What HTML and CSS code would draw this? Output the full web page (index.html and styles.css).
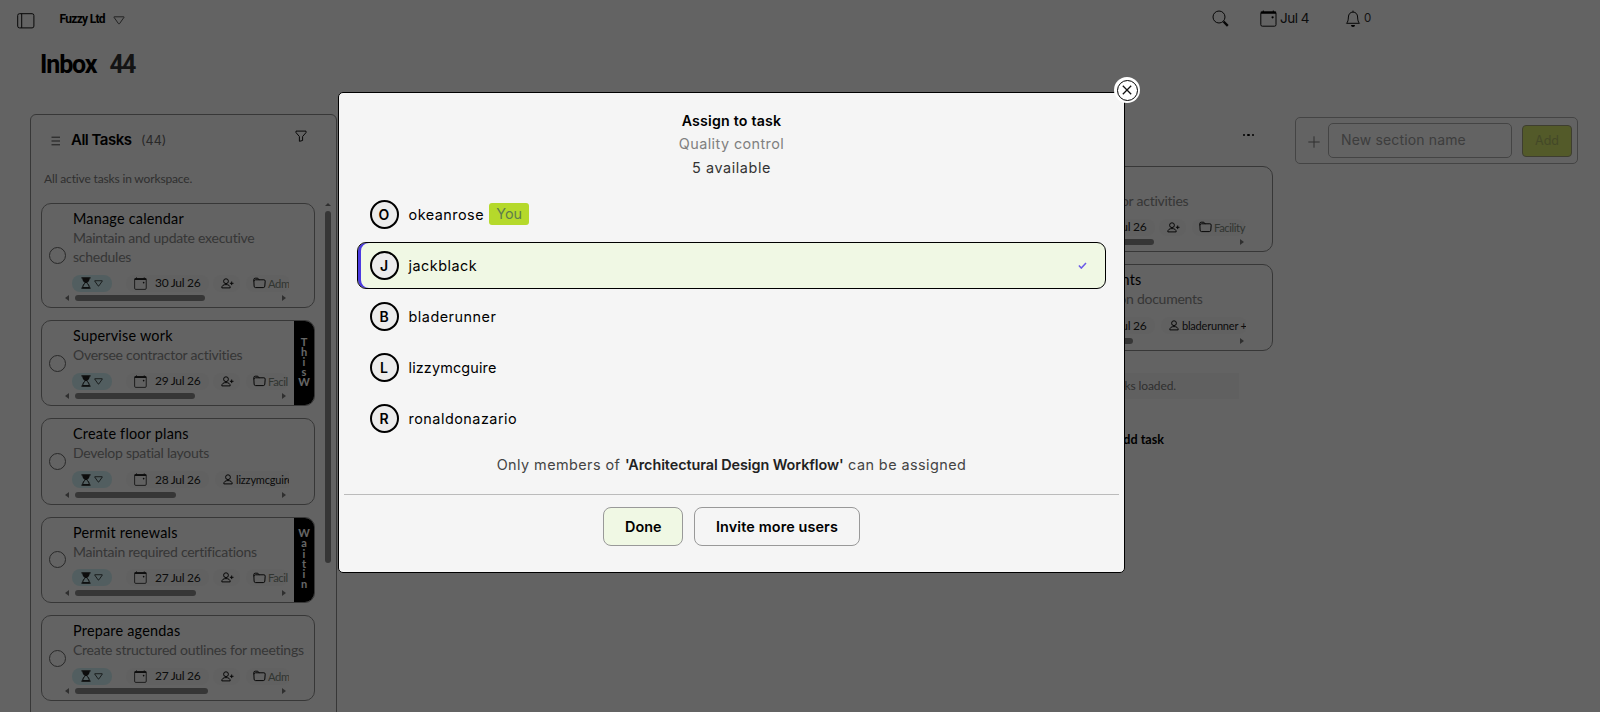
FILE: index.html
```html
<!DOCTYPE html>
<html lang="en">

<head>
    <meta charset="UTF-8">
    <meta name="viewport" content="width=device-width, initial-scale=1.0">
    <title>Inbox</title>
    <link rel="stylesheet" href="styles.css">
</head>

<body>
    <!-- icons -->
    <svg class="sprite">
        <symbol id="sidebar" viewBox="0 0 18 16"><rect x=".7" y=".7" width="16.2" height="14.2" rx="1.8" /><path d="M4.7.7v14.2" /></symbol>
        <symbol id="triangle" viewBox="0 0 12 9"><path d="M1.2.8h9.6q.5 0 .2.5L6.5 7.7q-.5.6-1 0L1 1.300Q.7.8 1.200.8z" /></symbol>
        <symbol id="search" viewBox="0 0 17 17"><circle cx="7" cy="7" r="6" /><path class="thick" d="M11.500 11.500l4.300 4.300" /></symbol>
        <symbol id="calendar" viewBox="0 0 17 17"><rect x=".8" y="2" width="15.200" height="14.200" rx="1.500" /><path class="solid" d="M.8 1.500h2V.4h1v1.100h9V.4h1v1.100h2.300v2.300H.8z" /><circle class="solid" cx="12.600" cy="7.300" r="1.100" /></symbol>
        <symbol id="bell" viewBox="0 0 16 17"><path d="M1.500 13.300h13c-1.300-1-1.800-3.300-1.900-6.300C12.500 4 10.700 2.100 8 2.100S3.500 4 3.400 7c-.1 3-.6 5.300-1.900 6.300zM8 2V.6" /><path class="solid" d="M6 14.900h4a2 2 0 0 1-4 0z" /></symbol>
        <symbol id="funnel" viewBox="0 0 12 12"><path d="M1 1.100h10v1.500L7.600 6.500v4L4.400 11.300V6.500L1 2.600z" /></symbol>
        <symbol id="menu" viewBox="0 0 10 10"><path d="M.5 1.200h8.500M.5 5h8.500M.5 8.800h8.500" /></symbol>
        <symbol id="hourglass" viewBox="0 0 10 12"><path class="solid" d="M.4.300h9.200v1.200H.4zM.4 10.500h9.200v1.200H.4zM1.300 1.300h7.400c0 2.300-1 3.500-2.700 4.700H4C2.300 4.800 1.300 3.600 1.300 1.300z" /><path d="M4.300 6C2.700 7.200 1.800 8.300 1.700 10.700h6.600C8.200 8.300 7.300 7.200 5.700 6" /></symbol>
        <symbol id="person-plus" viewBox="0 0 13 11"><circle cx="5" cy="3.200" r="2.400" /><path d="M.8 9.900c0-2.400 1.700-3.300 4.200-3.300s4.200.9 4.200 3.300zM10.700 3.500v3.600M8.900 5.300h3.600" /></symbol>
        <symbol id="person" viewBox="0 0 10 11"><circle cx="5" cy="3.200" r="2.400" /><path d="M.8 9.900c0-2.400 1.700-3.300 4.200-3.300s4.200.9 4.200 3.300z" /></symbol>
        <symbol id="folder" viewBox="0 0 13 12"><path d="M.8 2.600Q.8 1.200 2.200 1.200h2.600l1.300 1.600h4.800q1.300 0 1.300 1.300l-.4 5q-.1 1.500-1.500 1.500H2.500Q1.200 10.600 1.100 9.100zM.9 4.300Q1 2.900 2.400 2.800h4" /></symbol>
        <symbol id="plus" viewBox="0 0 12 12"><path d="M6 .3v11.400M.3 6h11.400" /></symbol>
        <symbol id="check" viewBox="0 0 9 7"><path d="M.9 3.600l2.400 2.500L8 1" /></symbol>
        <symbol id="cross" viewBox="0 0 10 10"><path d="M.8.8l8.400 8.400M9.200.8L.8 9.200" /></symbol>
    </svg>

    <div class="topbar">
        <svg class="icon i-sidebar"><use href="#sidebar" /></svg>
        <span class="company">Fuzzy Ltd</span>
        <svg class="icon i-company"><use href="#triangle" /></svg>
        <div class="tools">
            <svg class="icon i-search"><use href="#search" /></svg>
            <svg class="icon i-today"><use href="#calendar" /></svg>
            <span class="today">Jul 4</span>
            <svg class="icon i-bell"><use href="#bell" /></svg>
            <span class="alerts">0</span>
        </div>
    </div>
    <h1 class="page-title">Inbox <span class="page-count">44</span></h1>

    <div class="board">
        <div class="column all-tasks">
            <div class="column-head">
                <svg class="icon i-menu"><use href="#menu" /></svg>
                <h2>All Tasks</h2>
                <span class="count">(44)</span>
                <svg class="icon i-funnel"><use href="#funnel" /></svg>
            </div>
            <p class="column-note">All active tasks in workspace.</p>
            <div class="scroller">
                <div class="tasks">
                    <div class="task tall">
                        <span class="radio"></span>
                        <div class="task-body">
                            <div class="title">Manage calendar</div>
                            <div class="desc">Maintain and update executive schedules</div>
                            <div class="meta">
                                <span class="chip status"><svg class="icon i-hourglass"><use href="#hourglass" /></svg><svg class="icon i-drop"><use href="#triangle" /></svg></span>
                                <span class="chip date"><svg class="icon i-date"><use href="#calendar" /></svg>30 Jul 26</span>
                                <span class="chip assign"><svg class="icon i-plus-user"><use href="#person-plus" /></svg></span>
                                <span class="chip folder"><svg class="icon i-folder"><use href="#folder" /></svg>Adm</span>
                            </div>
                            <div class="hbar"><i class="prev"></i><i class="thumb" style="width: 130px"></i><i class="next"></i></div>
                        </div>
                    </div>
                    <div class="task">
                        <span class="radio"></span>
                        <div class="task-body">
                            <div class="title">Supervise work</div>
                            <div class="desc">Oversee contractor activities</div>
                            <div class="meta">
                                <span class="chip status"><svg class="icon i-hourglass"><use href="#hourglass" /></svg><svg class="icon i-drop"><use href="#triangle" /></svg></span>
                                <span class="chip date"><svg class="icon i-date"><use href="#calendar" /></svg>29 Jul 26</span>
                                <span class="chip assign"><svg class="icon i-plus-user"><use href="#person-plus" /></svg></span>
                                <span class="chip folder"><svg class="icon i-folder"><use href="#folder" /></svg>Facil</span>
                            </div>
                            <div class="hbar"><i class="prev"></i><i class="thumb" style="width: 120px"></i><i class="next"></i></div>
                        </div>
                        <div class="strip"><span>T</span><span>h</span><span>i</span><span>s</span><span>W</span></div>
                    </div>
                    <div class="task">
                        <span class="radio"></span>
                        <div class="task-body">
                            <div class="title">Create floor plans</div>
                            <div class="desc">Develop spatial layouts</div>
                            <div class="meta">
                                <span class="chip status"><svg class="icon i-hourglass"><use href="#hourglass" /></svg><svg class="icon i-drop"><use href="#triangle" /></svg></span>
                                <span class="chip date"><svg class="icon i-date"><use href="#calendar" /></svg>28 Jul 26</span>
                                <span class="chip user"><svg class="icon i-user"><use href="#person" /></svg>lizzymcguire</span>
                            </div>
                            <div class="hbar"><i class="prev"></i><i class="thumb" style="width: 101px"></i><i class="next"></i></div>
                        </div>
                    </div>
                    <div class="task">
                        <span class="radio"></span>
                        <div class="task-body">
                            <div class="title">Permit renewals</div>
                            <div class="desc">Maintain required certifications</div>
                            <div class="meta">
                                <span class="chip status"><svg class="icon i-hourglass"><use href="#hourglass" /></svg><svg class="icon i-drop"><use href="#triangle" /></svg></span>
                                <span class="chip date"><svg class="icon i-date"><use href="#calendar" /></svg>27 Jul 26</span>
                                <span class="chip assign"><svg class="icon i-plus-user"><use href="#person-plus" /></svg></span>
                                <span class="chip folder"><svg class="icon i-folder"><use href="#folder" /></svg>Facil</span>
                            </div>
                            <div class="hbar"><i class="prev"></i><i class="thumb" style="width: 121px"></i><i class="next"></i></div>
                        </div>
                        <div class="strip"><span>W</span><span>a</span><span>i</span><span>t</span><span>i</span><span>n</span></div>
                    </div>
                    <div class="task">
                        <span class="radio"></span>
                        <div class="task-body">
                            <div class="title">Prepare agendas</div>
                            <div class="desc">Create structured outlines for meetings</div>
                            <div class="meta">
                                <span class="chip status"><svg class="icon i-hourglass"><use href="#hourglass" /></svg><svg class="icon i-drop"><use href="#triangle" /></svg></span>
                                <span class="chip date"><svg class="icon i-date"><use href="#calendar" /></svg>27 Jul 26</span>
                                <span class="chip assign"><svg class="icon i-plus-user"><use href="#person-plus" /></svg></span>
                                <span class="chip folder"><svg class="icon i-folder"><use href="#folder" /></svg>Adm</span>
                            </div>
                            <div class="hbar"><i class="prev"></i><i class="thumb" style="width: 133px"></i><i class="next"></i></div>
                        </div>
                    </div>
                </div>
                <div class="vbar"><i class="up"></i><i class="vthumb"></i></div>
            </div>
        </div>

        <div class="column section">
            <div class="dots"><i></i><i></i><i></i></div>
            <div class="tasks">
                <div class="task">
                    <span class="radio"></span>
                    <div class="task-body">
                        <div class="title">Supervise work</div>
                        <div class="desc">Oversee contractor activities</div>
                        <div class="meta">
                            <span class="chip status"><svg class="icon i-hourglass"><use href="#hourglass" /></svg><svg class="icon i-drop"><use href="#triangle" /></svg></span>
                            <span class="chip date"><svg class="icon i-date"><use href="#calendar" /></svg>29 Jul 26</span>
                            <span class="chip assign"><svg class="icon i-plus-user"><use href="#person-plus" /></svg></span>
                            <span class="chip folder"><svg class="icon i-folder"><use href="#folder" /></svg>Facility</span>
                        </div>
                        <div class="hbar"><i class="prev"></i><i class="thumb" style="width: 133px"></i><i class="next"></i></div>
                    </div>
                </div>
                <div class="task">
                    <span class="radio"></span>
                    <div class="task-body">
                        <div class="title">Review documents</div>
                        <div class="desc">Check construction documents</div>
                        <div class="meta">
                            <span class="chip status"><svg class="icon i-hourglass"><use href="#hourglass" /></svg><svg class="icon i-drop"><use href="#triangle" /></svg></span>
                            <span class="chip date"><svg class="icon i-date"><use href="#calendar" /></svg>27 Jul 26</span>
                            <span class="chip user"><svg class="icon i-user"><use href="#person" /></svg>bladerunner +</span>
                        </div>
                        <div class="hbar"><i class="prev"></i><i class="thumb" style="width: 112px"></i><i class="next"></i></div>
                    </div>
                </div>
            </div>
            <div class="loaded">All tasks loaded.</div>
            <div class="add-task">Add task</div>
        </div>

        <div class="new-section">
            <svg class="icon i-plus"><use href="#plus" /></svg>
            <div class="field">New section name</div>
            <div class="add">Add</div>
        </div>
    </div>

    <div class="overlay">
        <div class="modal">
            <div class="close"><span><svg class="icon i-cross"><use href="#cross" /></svg></span></div>
            <h3>Assign to task</h3>
            <p class="task-name">Quality control</p>
            <p class="available">5 available</p>
            <ul class="users">
                <li><span class="avatar">O</span><span class="name">okeanrose</span><span class="you">You</span></li>
                <li class="selected"><span class="avatar">J</span><span class="name">jackblack</span><svg class="icon i-check"><use href="#check" /></svg></li>
                <li><span class="avatar">B</span><span class="name">bladerunner</span></li>
                <li><span class="avatar">L</span><span class="name tight">lizzymcguire</span></li>
                <li><span class="avatar">R</span><span class="name">ronaldonazario</span></li>
            </ul>
            <p class="hint">Only members of <b>'Architectural Design Workflow'</b> can be assigned</p>
            <div class="actions">
                <div class="btn done">Done</div>
                <div class="btn invite">Invite more users</div>
            </div>
        </div>
    </div>
</body>

</html>
```

FILE: styles.css
```css
* {
    margin: 0;
    padding: 0;
    box-sizing: border-box;
}

body {
    width: 100vw;
    height: 100vh;
    overflow: hidden;
    background-color: #f7f7f7;
    color: #000;
    font-family: Inter, sans-serif;
}

li {
    list-style: none;
}

.sprite {
    display: none;
}

.icon {
    flex: none;
    fill: none;
    stroke: #111;
    stroke-width: 1;
}

.thick {
    stroke-width: 2.4;
}

.solid {
    fill: currentColor;
    stroke: none;
}

/* top bar */
.topbar {
    display: flex;
    align-items: center;
    height: 38px;
    padding-left: 17px;
}

.i-sidebar {
    width: 18px;
    height: 16px;
    margin-top: 3px;
}

.company {
    width: 53px;
    margin-left: 24.5px;
    font: bold 12px Roboto, sans-serif;
    letter-spacing: -.7px;
    white-space: nowrap;
}

.i-company {
    width: 12px;
    height: 9px;
    margin-top: 2px;
    stroke: #555;
}

.tools {
    display: flex;
    align-items: center;
    height: 36px;
    margin: -2px 0 0 1087.5px;
}

.i-search,
.i-today {
    width: 17px;
    height: 17px;
}

.i-today {
    margin-left: 31px;
}

.today {
    width: 65px;
    margin-left: 3px;
    font-size: 13.5px;
    letter-spacing: -.5px;
    color: #222;
}

.i-bell {
    width: 16px;
    height: 17px;
}

.alerts {
    margin-left: 3px;
    font-size: 11.5px;
    color: #333;
}

.page-title {
    display: flex;
    height: 76px;
    padding: 12px 0 0 40px;
    font: bold 25px/30px Roboto, sans-serif;
    letter-spacing: -1.1px;
}

.page-count {
    margin-left: 13px;
    letter-spacing: -1.8px;
    color: #333;
}

/* board */
.board {
    display: flex;
    align-items: flex-start;
    padding: 0 21px 0 30px;
}

.all-tasks {
    width: 307px;
    height: 620px;
    border: 1px solid #8a8a8a;
    border-radius: 6px;
    padding: 0 5px 0 10px;
}

.column-head {
    display: flex;
    align-items: center;
    height: 49px;
    padding-left: 10px;
}

.column-head h2 {
    width: 69px;
    margin-left: 10px;
    font-size: 15px;
    font-weight: 600;
    letter-spacing: -.5px;
    white-space: nowrap;
}

.i-menu {
    width: 10px;
    height: 10px;
    margin-top: 2px;
    stroke: #444;
}

.count {
    margin: 1px 0 0 1px;
    font-size: 12.5px;
    color: #666;
}

.i-funnel {
    width: 12px;
    height: 12px;
    margin: -7px 24px 0 auto;
}

.column-note {
    height: 39px;
    padding: 5px 0 0 3px;
    font: 12px/20px Lato, sans-serif;
    letter-spacing: -.15px;
    color: #777;
}

.scroller {
    display: flex;
    justify-content: space-between;
}

.tasks {
    display: flex;
    flex-direction: column;
    gap: 12px;
    width: 274px;
}

.task {
    display: flex;
    align-items: center;
    height: 86.3px;
    border: 1px solid #8a8a8a;
    border-radius: 10px;
    overflow: hidden;
    padding-left: 7px;
    position: relative;
    font-family: Lato, sans-serif;
}

.task.tall {
    height: 105px;
}

.radio {
    flex: none;
    width: 17px;
    height: 17px;
    border: 1px solid #666;
    border-radius: 50%;
}

.task-body {
    display: flex;
    flex-direction: column;
    flex: 1;
    align-self: stretch;
    min-width: 0;
    padding: 5px 0 6px 7px;
}

.title,
.desc {
    font-size: 14.4px;
    line-height: 19px;
    letter-spacing: .22px;
}

.desc {
    font-size: 14px;
    letter-spacing: -.25px;
    color: #888;
}

.task:not(.tall) .desc {
    line-height: 20px;
    white-space: nowrap;
}

.meta {
    display: flex;
    align-items: center;
    height: 18px;
    margin: auto 25px 3px -1px;
    overflow: hidden;
}

.chip {
    display: flex;
    flex: none;
    align-items: center;
    height: 17px;
    border-radius: 8px;
    background-color: #f2f2f2;
    font-size: 12px;
    color: #222;
    white-space: nowrap;
}

.status {
    width: 40px;
    padding-left: 9px;
    background-color: #cdecef;
}

.i-hourglass {
    width: 10px;
    height: 12px;
}

.i-drop {
    width: 9px;
    height: 7px;
    margin-left: 3px;
}

.date {
    width: 83px;
    margin-left: 14px;
    padding-left: 8px;
    line-height: 14px;
    letter-spacing: -.3px;
}

.i-date {
    width: 13px;
    height: 13px;
    margin-right: 8px;
}

.assign {
    width: 27px;
    margin-left: 4px;
    padding-left: 8px;
}

.i-plus-user {
    width: 13px;
    height: 11px;
}

.folder {
    margin-left: 6px;
    padding-left: 7px;
    font-size: 11.2px;
    letter-spacing: -.4px;
    color: #7a857a;
}

.i-folder {
    width: 13px;
    height: 12px;
    margin-right: 2px;
}

.user {
    margin-left: 6px;
    padding-left: 8px;
    font-size: 11px;
    letter-spacing: -.2px;
}

.i-user {
    width: 10px;
    height: 11px;
    margin-right: 3px;
}

/* small scrollbars */
.hbar {
    display: flex;
    align-items: center;
    height: 6px;
    margin: 0 28px 0 -8px;
}

.prev {
    border: 3px solid transparent;
    border-right: 4px solid #777;
    border-left: 0;
    margin-right: 6px;
}

.next {
    border: 3px solid transparent;
    border-left: 4px solid #777;
    border-right: 0;
    margin-left: auto;
}

.thumb {
    height: 6px;
    border-radius: 3px;
    background-color: #888;
}

.vbar {
    display: flex;
    flex-direction: column;
    align-items: center;
    width: 6px;
}

.up {
    border: 3px solid transparent;
    border-bottom: 3px solid #777;
    border-top: 0;
}

.vthumb {
    width: 6px;
    height: 352px;
    margin-top: 5px;
    border-radius: 3px;
    background-color: #888;
}

/* section name on the right edge of a task */
.strip {
    display: flex;
    flex-direction: column;
    align-items: center;
    justify-content: center;
    position: absolute;
    top: 0;
    right: 0;
    bottom: 0;
    width: 20px;
    padding-bottom: 2px;
    background-color: #000;
    color: #fff;
    font: bold 11px/10.2px Lato, sans-serif;
}

/* section column */
.section {
    width: 306px;
    margin-left: 640px;
    padding: 0 10px;
}

.section .tasks {
    width: 286px;
}

.section .meta {
    margin-right: 26px;
}

.section .hbar {
    margin-right: 28px;
}

.dots {
    display: flex;
    justify-content: flex-end;
    gap: 2px;
    height: 52px;
    padding: 20px 19px 0 0;
}

.dots i {
    width: 2.4px;
    height: 2px;
    border-radius: 1px;
    background-color: #000;
}

.loaded {
    height: 26px;
    margin: 22px 34px 0;
    padding-left: 9px;
    background-color: #f1f1f1;
    font: 12px/25px Lato, sans-serif;
    letter-spacing: -.1px;
    color: #777;
    text-align: center;
}

.add-task {
    margin-top: 30px;
    padding-right: 109px;
    font: bold 12.6px/22px Lato, sans-serif;
    text-align: right;
}

.new-section {
    display: flex;
    align-items: center;
    width: 283px;
    height: 47px;
    margin: 3px 0 0 12px;
    border: 1px solid #aaa;
    border-radius: 5px;
    padding-left: 12px;
}

.i-plus {
    width: 12px;
    height: 12px;
    margin-top: 2px;
    stroke: #777;
}

.field {
    width: 184px;
    height: 35px;
    margin-left: 8px;
    border: 1px solid #aaa;
    border-radius: 5px;
    padding-left: 12px;
    font-size: 14px;
    line-height: 32px;
    letter-spacing: .15px;
    color: #999;
}

.add {
    width: 50px;
    height: 32px;
    margin-left: 10px;
    border: 1px solid #9c9c78;
    border-radius: 4px;
    background-color: #cfe068;
    font-size: 12.5px;
    line-height: 29px;
    text-align: center;
    color: #a9b562;
}

/* modal */
.overlay {
    position: fixed;
    inset: 0;
    padding: 92px 0 0 338px;
    background-color: rgba(0, 0, 0, .6);
}

.modal {
    display: flex;
    flex-direction: column;
    align-items: center;
    position: relative;
    width: 787px;
    height: 481px;
    border: 1px solid #000;
    border-radius: 5px;
    padding: 17px 5px 0;
    background-color: #f5f5f5;
    font-size: 14.4px;
}

.close {
    display: flex;
    align-items: center;
    justify-content: center;
    position: absolute;
    top: -16px;
    right: -16px;
    width: 26px;
    height: 26px;
    border-radius: 50%;
    background-color: #fff;
}

.close span {
    display: flex;
    align-items: center;
    justify-content: center;
    width: 21px;
    height: 21px;
    border: 1.300px solid #000;
    border-radius: 50%;
}

.i-cross {
    width: 10px;
    height: 10px;
    stroke-width: 1.300;
}

.modal h3 {
    font-size: 14.2px;
    font-weight: 600;
    line-height: 22px;
    letter-spacing: .2px;
}

.task-name {
    line-height: 23px;
    letter-spacing: .42px;
    color: #808080;
}

.available {
    line-height: 25px;
    letter-spacing: .6px;
    color: #333;
}

.users {
    display: flex;
    flex-direction: column;
    gap: 4.2px;
    align-self: stretch;
    margin: 10.5px 13px 0 13px;
}

.users li {
    display: flex;
    align-items: center;
    height: 47px;
    border: 1px solid transparent;
    border-radius: 9px;
    padding: 0 18px 0 11.5px;
}

.users .selected {
    border-color: #000;
    background-color: #f0f8e4;
    box-shadow: inset 3px 0 0 #4b3be0;
}

.avatar {
    width: 29px;
    height: 29px;
    margin-right: 10px;
    border: 2px solid #000;
    border-radius: 50%;
    background-color: #ececec;
    font-size: 14px;
    font-weight: 600;
    line-height: 25px;
    text-align: center;
}

.name {
    letter-spacing: .5px;
}

.name.tight {
    letter-spacing: .15px;
}

.you {
    width: 40px;
    height: 22px;
    margin-left: 5px;
    border-radius: 3px;
    background-color: #b5d92b;
    line-height: 22px;
    text-align: center;
    color: #5f7d4c;
}

.i-check {
    width: 9px;
    height: 7px;
    margin-left: auto;
    stroke: #6a5ae8;
    stroke-width: 1.500;
}

.hint {
    margin-top: 11px;
    line-height: 24px;
    letter-spacing: .45px;
    color: #444;
}

.hint b {
    font-weight: 600;
    letter-spacing: -.07px;
    color: #222;
}

.actions {
    display: flex;
    justify-content: center;
    gap: 11px;
    align-self: stretch;
    margin-top: 17px;
    border-top: 1px solid #bbb;
    padding-top: 12px;
}

.btn {
    width: 80px;
    height: 39px;
    border: 1px solid #999;
    border-radius: 8px;
    font-weight: 600;
    line-height: 37px;
    text-align: center;
    white-space: nowrap;
}

.done {
    background-color: #f0f8e4;
}

.invite {
    width: 165.5px;
    letter-spacing: .12px;
}
```
